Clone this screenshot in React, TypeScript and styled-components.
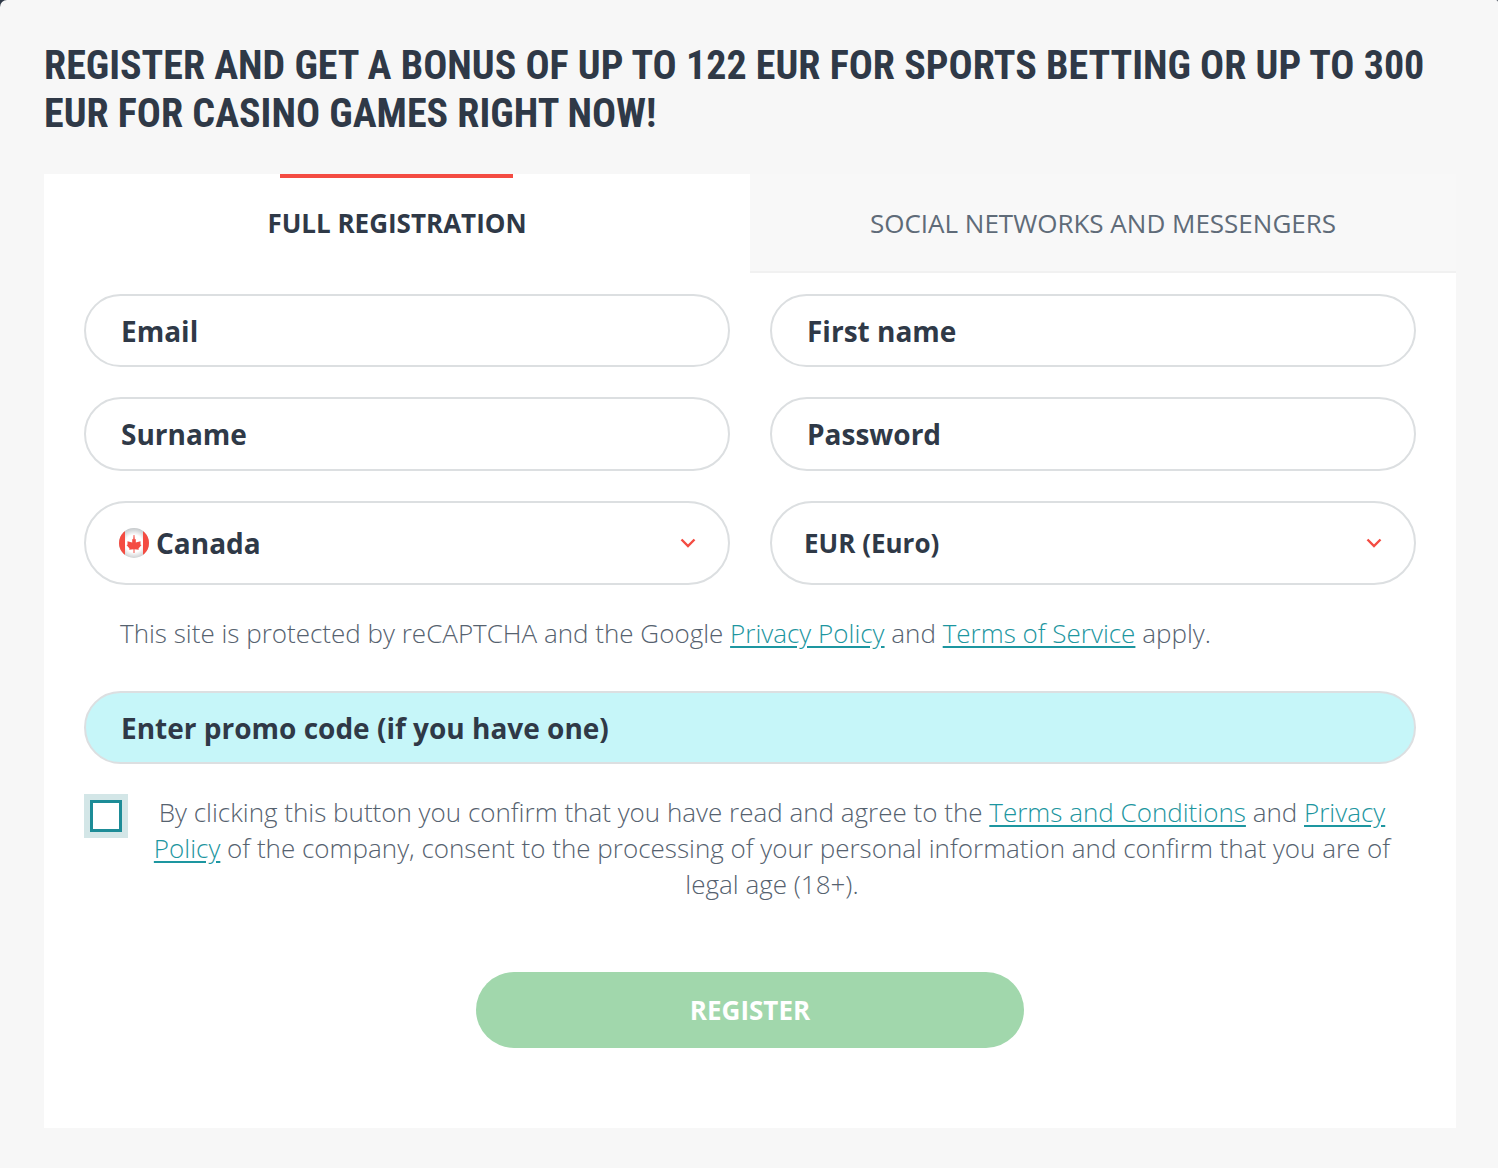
import styled, { createGlobalStyle } from 'styled-components'

const GlobalStyle = createGlobalStyle`
  html, body {
    margin: 0;
    padding: 0;
    background: #2f3947;
  }
  * {
    box-sizing: border-box;
  }
`

const Page = styled.div`
  width: 1498px;
  height: 1168px;
  padding: 42px 42px 40px 44px;
  background: #f7f7f7;
  border-radius: 7px 2px 0 0;
  overflow: hidden;
  font-family: 'Open Sans', sans-serif;
  color: #2f3947;
`

const Heading = styled.h1`
  margin: 0 0 36px;
  height: 96px;
  font-family: Roboto, sans-serif;
  font-stretch: 75%;
  font-size: 40px;
  line-height: 48px;
  font-weight: 700;
  color: #2f3947;
`

const Card = styled.section`
  height: 954px;
  background: #fff;
`

const Tabs = styled.div`
  display: grid;
  grid-template-columns: 706px 706px;
  height: 99px;
`

const Tab = styled.div<{ $active?: boolean }>`
  position: relative;
  display: flex;
  align-items: center;
  justify-content: center;
  font-size: 26px;
  font-weight: ${(p) => (p.$active ? 700 : 400)};
  color: ${(p) => (p.$active ? '#2f3947' : '#5f6b78')};
  background: ${(p) => (p.$active ? '#fff' : '#f8f8f8')};
  border-bottom: 2px solid ${(p) => (p.$active ? '#fff' : '#f1f1f1')};

  ${(p) =>
    p.$active &&
    `
    &::before {
      content: '';
      position: absolute;
      top: 0;
      left: 236px;
      width: 233px;
      height: 4px;
      background: #f44c42;
    }
  `}
`

const Form = styled.form`
  padding: 21px 40px 0;
`

const FieldGrid = styled.div`
  display: grid;
  grid-template-columns: 646px 646px;
  column-gap: 40px;
  row-gap: 30px;
`

const Field = styled.div<{ $tall?: boolean; $first?: boolean }>`
  display: flex;
  align-items: center;
  justify-content: space-between;
  height: ${(p) => (p.$tall ? 84 : p.$first ? 73 : 74)}px;
  padding: 0 32px 0 35px;
  border: 2px solid #dcdfe1;
  border-radius: 42px;
  background: #fff;
  font-size: 28px;
  font-weight: 700;
  color: #2f3947;
`

const CountryLabel = styled.span`
  display: flex;
  align-items: center;
  gap: 7px;
  margin-left: -2px;
`

const CurrencyLabel = styled.span`
  margin-left: -3px;
  font-size: 26px;
`

const Notice = styled.p`
  margin: 30px 0 0 36px;
  font-size: 26px;
  line-height: 36px;
  font-weight: 300;
  color: #56626f;
`

const TextLink = styled.a`
  color: #1d96a0;
  text-decoration: underline;
  text-underline-offset: 3px;
`

const PromoField = styled.div`
  display: flex;
  align-items: center;
  height: 73px;
  margin-top: 40px;
  padding: 0 35px;
  border: 2px solid #dcdfe1;
  border-radius: 37px;
  background: #c6f6f9;
  font-size: 28px;
  font-weight: 700;
  color: #2f3947;
`

const ConsentRow = styled.div`
  display: flex;
  margin-top: 30px;
`

const CheckboxFrame = styled.div`
  flex: none;
  display: flex;
  align-items: center;
  justify-content: center;
  width: 44px;
  height: 44px;
  background: #d3e6e7;
`

const CheckboxBox = styled.div`
  width: 32px;
  height: 32px;
  border: 3px solid #1d8c97;
  background: #fff;
`

const ConsentText = styled.p`
  flex: 1;
  margin: 0;
  padding: 0 20px;
  font-size: 26px;
  line-height: 36px;
  font-weight: 300;
  text-align: center;
  color: #56626f;
`

const SubmitRow = styled.div`
  display: flex;
  justify-content: center;
  margin-top: 70px;
`

const SubmitButton = styled.button`
  width: 548px;
  height: 76px;
  border: 0;
  border-radius: 38px;
  background: #a1d7ac;
  color: #fff;
  font-family: 'Open Sans', sans-serif;
  font-size: 26px;
  font-weight: 700;
`

function Chevron() {
  return (
    <svg width="16" height="10" viewBox="0 0 16 10" fill="none" aria-hidden>
      <path d="M1.5 1.5 8 8l6.5-6.5" stroke="#f44c42" strokeWidth="2.4" />
    </svg>
  )
}

function CanadaFlag() {
  return (
    <svg width="30" height="30" viewBox="0 0 30 30" aria-hidden>
      <defs>
        <radialGradient id="flagShade" cx="50%" cy="52%" r="52%">
          <stop offset="55%" stopColor="#ffffff" />
          <stop offset="100%" stopColor="#c4c8ca" />
        </radialGradient>
        <clipPath id="flagClip">
          <circle cx="15" cy="15" r="15" />
        </clipPath>
      </defs>
      <g clipPath="url(#flagClip)">
        <rect width="30" height="30" fill="url(#flagShade)" />
        <rect width="6" height="30" fill="#f44c42" />
        <rect x="24" width="6" height="30" fill="#f44c42" />
      </g>
      <path
        d="M14.600 7h.8l.4 4.500 1-.5v3.500l4.700-1.300v3.500l1 .4-3 3.400.3 1.200-4.300-.4V25h-1v-3.700l-4.300.4.300-1.200-3-3.400 1-.4v-3.500l4.700 1.300V11l1 .5Z"
        fill="#f44c42"
      />
    </svg>
  )
}

export default function App() {
  return (
    <Page>
      <GlobalStyle />
      <Heading>
        REGISTER AND GET A BONUS OF UP TO 122 EUR FOR SPORTS BETTING OR UP TO 300 EUR FOR CASINO GAMES RIGHT NOW!
      </Heading>
      <Card>
        <Tabs>
          <Tab $active>FULL REGISTRATION</Tab>
          <Tab>SOCIAL NETWORKS AND MESSENGERS</Tab>
        </Tabs>
        <Form>
          <FieldGrid>
            <Field $first>Email</Field>
            <Field $first>First name</Field>
            <Field>Surname</Field>
            <Field>Password</Field>
            <Field $tall>
              <CountryLabel>
                <CanadaFlag />
                Canada
              </CountryLabel>
              <Chevron />
            </Field>
            <Field $tall>
              <CurrencyLabel>EUR (Euro)</CurrencyLabel>
              <Chevron />
            </Field>
          </FieldGrid>
          <Notice>
            This site is protected by reCAPTCHA and the Google <TextLink>Privacy Policy</TextLink> and{' '}
            <TextLink>Terms of Service</TextLink> apply.
          </Notice>
          <PromoField>Enter promo code (if you have one)</PromoField>
          <ConsentRow>
            <CheckboxFrame>
              <CheckboxBox />
            </CheckboxFrame>
            <ConsentText>
              By clicking this button you confirm that you have read and agree to the{' '}
              <TextLink>Terms and Conditions</TextLink> and <TextLink>Privacy Policy</TextLink> of the company, consent
              to the processing of your personal information and confirm that you are of legal age (18+).
            </ConsentText>
          </ConsentRow>
          <SubmitRow>
            <SubmitButton type="button">REGISTER</SubmitButton>
          </SubmitRow>
        </Form>
      </Card>
    </Page>
  )
}
